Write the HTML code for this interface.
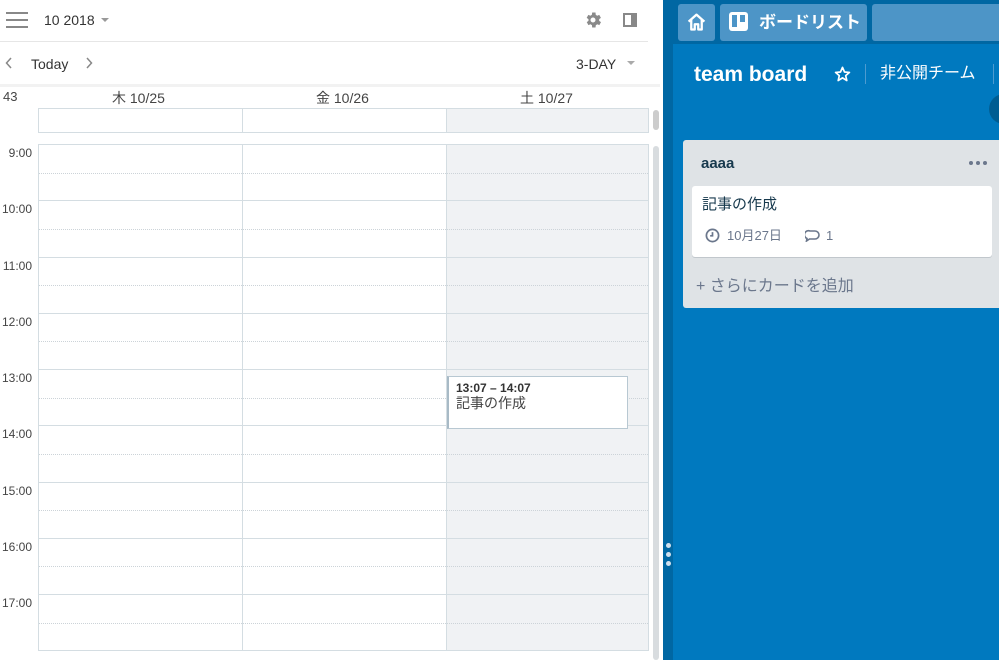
<!DOCTYPE html>
<html><head><meta charset="utf-8"><style>
*{margin:0;padding:0;box-sizing:border-box}
body{width:999px;height:660px;overflow:hidden;position:relative;background:#fff;font-family:"Liberation Sans","Noto Sans CJK JP",sans-serif;color:#333}
.a{position:absolute;line-height:1.15}
.t{font-size:14px;color:#444}
</style></head><body>
<div class="a" style="left:6px;top:12px;width:22px;height:16px">
<div class="a" style="left:0;top:0;width:22px;height:2px;background:#888"></div>
<div class="a" style="left:0;top:7px;width:22px;height:2px;background:#888"></div>
<div class="a" style="left:0;top:14px;width:22px;height:2px;background:#888"></div></div>
<div class="a" style="left:44px;top:12px;font-size:14px;color:#333">10 2018</div>
<div class="a" style="left:101px;top:18px;border-left:4px solid transparent;border-right:4px solid transparent;border-top:4px solid #999"></div>
<svg class="a" style="left:583px;top:10px" width="20" height="20" viewBox="0 0 24 24"><path fill="#8a8a8a" d="M19.4 13a7.5 7.5 0 0 0 0-2l2.1-1.6-2-3.5-2.5 1a7 7 0 0 0-1.7-1L15 3h-4l-.4 2.9a7 7 0 0 0-1.7 1l-2.5-1-2 3.5L6.6 11a7.5 7.5 0 0 0 0 2l-2.1 1.6 2 3.5 2.5-1a7 7 0 0 0 1.7 1L11 21h4l.4-2.9a7 7 0 0 0 1.7-1l2.5 1 2-3.5zM12 15a3 3 0 1 1 0-6 3 3 0 0 1 0 6z"/></svg>
<div class="a" style="left:623px;top:13px;width:14px;height:14px;border:2px solid #888;border-right-width:6px"></div>
<div class="a" style="left:0;top:41px;width:648px;height:1px;background:#e6e6e6"></div>
<svg class="a" style="left:5px;top:57px" width="8" height="12" viewBox="0 0 8 12"><path d="M6 1 1.5 6 6 11" fill="none" stroke="#888" stroke-width="1.5"/></svg>
<div class="a" style="left:31px;top:56px;font-size:14px;color:#333">Today</div>
<svg class="a" style="left:85px;top:57px" width="8" height="12" viewBox="0 0 8 12"><path d="M2 1l4.5 5L2 11" fill="none" stroke="#888" stroke-width="1.5"/></svg>
<div class="a" style="left:576px;top:56px;font-size:14px;color:#333">3-DAY</div>
<div class="a" style="left:627px;top:61px;border-left:4px solid transparent;border-right:4px solid transparent;border-top:4px solid #aaa"></div>
<div class="a" style="left:0;top:84px;width:660px;height:3px;background:#f2f2f2"></div>
<div class="a t" style="left:3px;top:90px;font-size:13px">43</div>
<div class="a t" style="left:112px;top:90px">木 10/25</div>
<div class="a t" style="left:316px;top:90px">金 10/26</div>
<div class="a t" style="left:520px;top:90px">土 10/27</div>
<div class="a" style="left:38px;top:108px;width:611px;height:25px;border:1px solid #d4dde2"></div>
<div class="a" style="left:446px;top:109px;width:202px;height:23px;background:#f0f2f4"></div>
<div class="a" style="left:242px;top:108px;width:1px;height:25px;background:#d4dde2"></div>
<div class="a" style="left:446px;top:108px;width:1px;height:25px;background:#d4dde2"></div>
<div class="a" style="left:653px;top:110px;width:6px;height:20px;background:#ccc;border-radius:3px"></div>
<div class="a" style="left:653px;top:146px;width:6px;height:514px;background:#d8dcdf;border-radius:3px"></div>
<div class="a" style="left:38px;top:144px;width:611px;height:507px;border:1px solid #d4dde2;overflow:hidden">
<div class="a" style="left:407px;top:0;width:203px;height:507px;background:#f0f2f4"></div>
<div class="a" style="left:203px;top:0;width:1px;height:507px;background:#d4dde2"></div>
<div class="a" style="left:407px;top:0;width:1px;height:507px;background:#d4dde2"></div>
<div id="lines"></div>
</div>
<div id="labels"></div>
<div class="a" style="left:447px;top:376px;width:181px;height:53px;background:#fff;border:1px solid #b8c8d2;border-left:2px solid #a8bac6"></div>
<div class="a" style="left:456px;top:382px;font-size:12px;font-weight:bold;color:#333">13:07 – 14:07</div>
<div class="a" style="left:456px;top:395px;font-size:14px;color:#444">記事の作成</div>
<div class="a" style="left:660px;top:0;width:3px;height:660px;background:#fff"></div>
<div class="a" style="left:663px;top:0;width:336px;height:660px;background:#0079bf"></div>
<div class="a" style="left:663px;top:0;width:10px;height:660px;background:#0067a3"></div>
<div class="a" style="left:663px;top:0;width:336px;height:44px;background:#0067a3"></div>
<div class="a" style="left:666px;top:543px;width:5px;height:5px;border-radius:50%;background:#cfe0ee"></div>
<div class="a" style="left:666px;top:552px;width:5px;height:5px;border-radius:50%;background:#cfe0ee"></div>
<div class="a" style="left:666px;top:561px;width:5px;height:5px;border-radius:50%;background:#cfe0ee"></div>
<div class="a" style="left:678px;top:4px;width:37px;height:37px;border-radius:3px;background:#4d95c7"></div>
<svg class="a" style="left:686px;top:12px" width="21" height="21" viewBox="0 0 24 24"><path d="M3 11 12 3l9 8M6 9v11h4v-6h4v6h4V9" fill="none" stroke="#fff" stroke-width="2.6" stroke-linejoin="round"/></svg>
<div class="a" style="left:720px;top:4px;width:147px;height:37px;border-radius:3px;background:#4d95c7"></div>
<div class="a" style="left:729px;top:12px;width:19px;height:19px;border-radius:3px;background:#fff"></div>
<div class="a" style="left:732px;top:15px;width:5px;height:12px;background:#4d95c7"></div>
<div class="a" style="left:740px;top:15px;width:5px;height:7px;background:#4d95c7"></div>
<div class="a" style="left:759px;top:13px;font-size:17px;font-weight:bold;color:#fff">ボードリスト</div>
<div class="a" style="left:872px;top:4px;width:130px;height:37px;border-radius:3px;background:#4d95c7"></div>
<div class="a" style="left:694px;top:63px;font-size:21px;font-weight:bold;color:#fff">team board</div>
<svg class="a" style="left:834px;top:66px" width="17" height="16" viewBox="0 0 24 23"><path d="M12 2l2.9 6.6 7.1.6-5.4 4.7 1.6 7-6.2-3.8-6.2 3.8 1.6-7L2 9.2l7.1-.6z" fill="none" stroke="#fff" stroke-width="2.4" stroke-linejoin="round"/></svg>
<div class="a" style="left:865px;top:64px;width:1px;height:20px;background:#4d9bd0"></div>
<div class="a" style="left:880px;top:65px;font-size:16px;color:#fff">非公開チーム</div>
<div class="a" style="left:993px;top:64px;width:1px;height:20px;background:#4d9bd0"></div>
<div class="a" style="left:989px;top:94px;width:30px;height:30px;border-radius:50%;background:#005d92"></div>
<div class="a" style="left:683px;top:140px;width:330px;height:168px;border-radius:3px;background:#dfe3e6"></div>
<div class="a" style="left:701px;top:155px;font-size:15px;font-weight:bold;color:#17394d">aaaa</div>
<div class="a" style="left:969px;top:161px;width:4px;height:4px;border-radius:50%;background:#6b778c"></div>
<div class="a" style="left:976px;top:161px;width:4px;height:4px;border-radius:50%;background:#6b778c"></div>
<div class="a" style="left:983px;top:161px;width:4px;height:4px;border-radius:50%;background:#6b778c"></div>
<div class="a" style="left:692px;top:186px;width:300px;height:71px;border-radius:3px;background:#fff;box-shadow:0 1px 0 #c1c7cc"></div>
<div class="a" style="left:702px;top:196px;font-size:15px;color:#17394d">記事の作成</div>
<svg class="a" style="left:705px;top:228px" width="15" height="15" viewBox="0 0 14 14"><circle cx="7" cy="7" r="5.7" fill="none" stroke="#6b778c" stroke-width="1.6"/><path d="M7 3.8V7.3H4.8" fill="none" stroke="#6b778c" stroke-width="1.6"/></svg>
<div class="a" style="left:727px;top:229px;font-size:13px;color:#6b778c">10月27日</div>
<svg class="a" style="left:805px;top:229px" width="15" height="13" viewBox="0 0 15 13"><path d="M2 9.5 1.5 12l3-2h5.5a4 4 0 0 0 0-8H5a4 4 0 0 0-3 7.5z" fill="none" stroke="#6b778c" stroke-width="1.6"/></svg>
<div class="a" style="left:826px;top:229px;font-size:13px;color:#6b778c">1</div>
<div class="a" style="left:696px;top:278px;font-size:16px;color:#6b778c">+ さらにカードを追加</div>
<script>
var L='',B='';for(var i=0;i<9;i++){var y=i*56.25;
if(i>0)L+='<div class="a" style="left:0;top:'+(y-1)+'px;width:611px;height:1px;background:#d4dde2"></div>';
L+='<div class="a" style="left:0;top:'+(y+27.5)+'px;width:611px;border-top:1px dotted #ccd3d8"></div>';
var lbl=(9+i)+':00';B+='<div class="a" style="left:0;width:32px;text-align:right;top:'+(147+y)+'px;font-size:12px;color:#444">'+lbl+'</div>';}
document.getElementById('lines').innerHTML=L;document.getElementById('labels').innerHTML=B;
</script>
</body></html>
